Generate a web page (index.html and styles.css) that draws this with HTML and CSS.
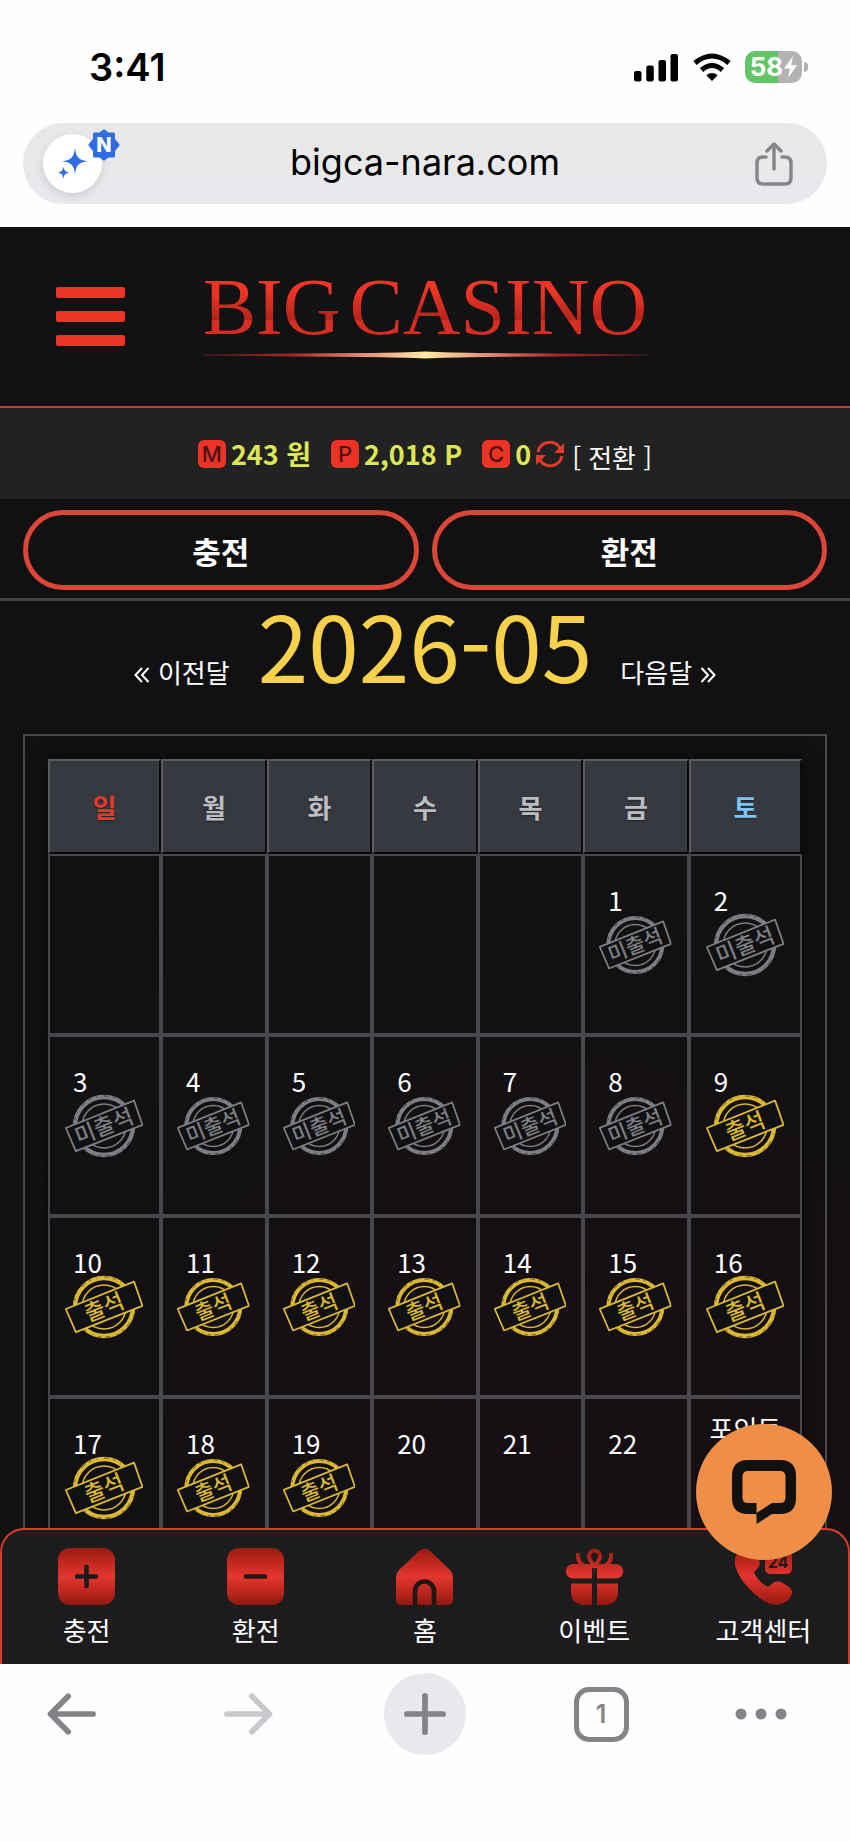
FILE: index.html
```html
<!DOCTYPE html>
<html lang="ko">
<head>
<meta charset="utf-8">
<meta name="viewport" content="width=device-width, initial-scale=1">
<title>BIG CASINO</title>
<link rel="stylesheet" href="styles.css">
</head>
<body>
<svg class="defs" aria-hidden="true">
  <defs>
    <linearGradient id="red" x1="0" y1="0" x2="0" y2="57" gradientUnits="userSpaceOnUse">
      <stop offset="0" stop-color="#9c1a14"/><stop offset=".2" stop-color="#b8251c"/><stop offset=".5" stop-color="#e3362e"/><stop offset=".8" stop-color="#b8251c"/><stop offset="1" stop-color="#8f1812"/>
    </linearGradient>
    <symbol id="ring" viewBox="0 0 78 64">
      <circle cx="39" cy="32" r="29" fill="none" stroke="currentColor" stroke-width="4.4"/>
      <circle cx="39" cy="32" r="30" fill="none" stroke="#111114" stroke-width=".8" stroke-dasharray="3 5 1 7 5 4" opacity=".7"/>
      <circle cx="39" cy="32" r="22" fill="none" stroke="currentColor" stroke-width="1.5"/>
      <path d="M.8 34 69 6.6 77.4 30.8 10.8 57.2Z" fill="#111114" stroke="currentColor" stroke-width="1.8" stroke-linejoin="round"/>
    </symbol>
    <symbol id="absent" viewBox="0 0 78 64">
      <use href="#ring"/>
      <text class="stamp-text" x="39" y="40" text-anchor="middle" transform="rotate(-21.8 39 32)">미출석</text>
    </symbol>
    <symbol id="present" viewBox="0 0 78 64">
      <use href="#ring"/>
      <text class="stamp-text" x="39" y="40" text-anchor="middle" transform="rotate(-21.8 39 32)">출석</text>
    </symbol>
  </defs>
</svg>

<div class="browser-top">
  <div class="status">
    <span class="time">3:41</span>
    <span class="indicators">
      <svg width="46" height="30" viewBox="0 0 46 30"><rect x="1" y="19" width="7.5" height="10.5" rx="2.2"/><rect x="13.3" y="13.5" width="7.5" height="16" rx="2.2"/><rect x="25.5" y="8" width="7.5" height="21.5" rx="2.2"/><rect x="37.5" y="2" width="7.5" height="27.5" rx="2.2"/></svg>
      <svg width="38" height="28" viewBox="0 0 38 28"><path d="M19 28 13.3 22.2Q19 17.6 24.7 22.2Z"/><path d="M8.5 17Q19 8 29.500 17" fill="none" stroke="#000" stroke-width="5"/><path d="M2 10Q19-4 36 10" fill="none" stroke="#000" stroke-width="5"/></svg>
      <span class="battery"><span>58</span><svg width="13" height="22" viewBox="0 0 13 22"><path d="M9 0 0 12.500h6L4 22 13 9H7.200Z" fill="#fff"/></svg></span>
    </span>
  </div>
  <div class="address">
    <button class="assist" aria-label="AI">
      <svg width="32" height="32" viewBox="0 0 32 32"><path d="M18 0c1 9 3.500 12 13 13.300C21.500 14.600 19 17 18 26.500 17 17 14.500 14.600 5 13.300 14.500 12 17 9 18 0ZM6.500 18.500c.6 4 2 5.400 6 6-4 .6-5.400 2-6 6.500-.6-4.500-2-5.900-6-6.500 4-.6 5.400-2 6-6Z" fill="#2f6de0"/></svg>
      <span class="new"><svg width="32" height="32" viewBox="0 0 32 32"><path d="m16 2 4 3h5.500v5.500l4.500 5.500-4.500 5.500V27H20l-4 3-4-3H6.500v-5.500L2 16l4.500-5.500V5H12Z" fill="#2f6de0" stroke="#2f6de0" stroke-width="3" stroke-linejoin="round"/></svg><b>N</b></span>
    </button>
    <span class="url">bigca-nara.com</span>
    <button class="share" aria-label="공유">
      <svg width="38" height="44" viewBox="0 0 38 44" fill="none" stroke="#86868a" stroke-width="3.500" stroke-linecap="round" stroke-linejoin="round"><path d="M11 15H8q-6 0-6 6v15q0 6 6 6h22q6 0 6-6V21q0-6-6-6h-3M19 27V3M12 9l7-7 7 7"/></svg>
    </button>
  </div>
</div>

<div class="site">
  <header class="header">
    <button class="menu" aria-label="메뉴"><i></i><i></i><i></i></button>
    <a class="logo" href="#"><span class="words"><span>BIG</span><span>CASINO</span></span><svg viewBox="0 0 444 12" preserveAspectRatio="none">
      <defs><linearGradient id="beam"><stop offset="0" stop-color="#541a1a"/><stop offset=".2" stop-color="#a82422"/><stop offset=".34" stop-color="#e08070"/><stop offset=".5" stop-color="#ffe9a8"/><stop offset=".66" stop-color="#e08070"/><stop offset=".8" stop-color="#a82422"/><stop offset="1" stop-color="#541a1a"/></linearGradient></defs>
      <path d="M0 5.500 90 4.500 160 4Q200 3.600 222 2.500 244 3.600 284 4L354 4.500 444 5.500V6.500L354 7.500 284 8Q244 8.400 222 9.500 200 8.400 160 8L90 7.500 0 6.500Z" fill="url(#beam)"/></svg></a>
  </header>

  <div class="balance">
    <span class="item"><span class="badge">M</span><b>243 원</b></span>
    <span class="item"><span class="badge">P</span><b>2,018 P</b></span>
    <span class="item"><span class="badge">C</span><b>0</b>
      <button class="swap"><svg width="28" height="28" viewBox="0 0 28 28"><g fill="none" stroke="#e13a2c" stroke-width="3"><path d="M2 12A12 12 0 0 1 24 8M26 16A12 12 0 0 1 4 20"/></g><path d="M28 3v10H18ZM0 25V15h10Z" fill="#e13a2c"/></svg><span>[ 전환 ]</span></button></span>
  </div>

  <div class="actions">
    <button>충전</button>
    <button>환전</button>
  </div>

  <main class="attendance">
    <div class="month">
      <a href="#"><svg width="16" height="16" viewBox="0 0 16 16"><path d="M8 1 1.500 8 8 15M14.500 1 8 8l6.500 7"/></svg>이전달</a>
      <h1>2026-05</h1>
      <a href="#">다음달<svg width="16" height="16" viewBox="0 0 16 16"><path d="m1.500 1 6.500 7-6.500 7M8 1l6.500 7L8 15"/></svg></a>
    </div>
    <div class="frame">
      <table>
        <colgroup><col class="edge"><col><col><col><col><col><col class="edge"></colgroup>
        <thead><tr><th class="sun">일</th><th>월</th><th>화</th><th>수</th><th>목</th><th>금</th><th class="sat">토</th></tr></thead>
        <tbody>
          <tr>
            <td></td><td></td><td></td><td></td><td></td>
            <td>1<svg class="stamp"><use href="#absent"/></svg></td>
            <td>2<svg class="stamp"><use href="#absent"/></svg></td>
          </tr>
          <tr>
            <td>3<svg class="stamp"><use href="#absent"/></svg></td>
            <td>4<svg class="stamp"><use href="#absent"/></svg></td>
            <td>5<svg class="stamp"><use href="#absent"/></svg></td>
            <td>6<svg class="stamp"><use href="#absent"/></svg></td>
            <td>7<svg class="stamp"><use href="#absent"/></svg></td>
            <td>8<svg class="stamp"><use href="#absent"/></svg></td>
            <td>9<svg class="stamp on"><use href="#present"/></svg></td>
          </tr>
          <tr>
            <td>10<svg class="stamp on"><use href="#present"/></svg></td>
            <td>11<svg class="stamp on"><use href="#present"/></svg></td>
            <td>12<svg class="stamp on"><use href="#present"/></svg></td>
            <td>13<svg class="stamp on"><use href="#present"/></svg></td>
            <td>14<svg class="stamp on"><use href="#present"/></svg></td>
            <td>15<svg class="stamp on"><use href="#present"/></svg></td>
            <td>16<svg class="stamp on"><use href="#present"/></svg></td>
          </tr>
          <tr>
            <td>17<svg class="stamp on"><use href="#present"/></svg></td>
            <td>18<svg class="stamp on"><use href="#present"/></svg></td>
            <td>19<svg class="stamp on"><use href="#present"/></svg></td>
            <td>20</td><td>21</td><td>22</td>
            <td class="reward">포인트</td>
          </tr>
        </tbody>
      </table>
    </div>
  </main>

  <nav class="tabs">
    <a href="#"><svg viewBox="0 0 57 57"><rect width="57" height="57" rx="12" fill="url(#red)"/><path d="M28.500 19v19M19 28.500h19" stroke="#1c1c1c" stroke-width="4.600" stroke-linecap="round"/></svg>충전</a>
    <a href="#"><svg viewBox="0 0 57 57"><rect width="57" height="57" rx="12" fill="url(#red)"/><path d="M19 28.500h19" stroke="#2a1513" stroke-width="4.600" stroke-linecap="round"/></svg>환전</a>
    <a href="#"><svg viewBox="0 0 57 57"><path d="M3 22 23 3q5.500-5 11 0L54 22q3 3 3 7v22q0 6-6 6H6q-6 0-6-6V29q0-4 3-7Z" fill="url(#red)"/><path d="M19 57V43a9.500 9.500 0 0 1 19 0v14" fill="none" stroke="#1f1715" stroke-width="4.600"/></svg>홈</a>
    <a href="#"><svg viewBox="0 0 57 57"><path d="M7 16H50a7 7 0 0 1 0 14.500H31V20h-5v10.500H7A7 7 0 0 1 7 16ZM5 35.500h21V57H18Q5 56 5 44ZM31 35.500h21V44q0 12-13 13h-8Z" fill="url(#red)"/><path d="M28.500 18Q23 12 23 8a5.500 5.500 0 0 1 11 0q0 4-5.500 10ZM12 5q-1 9 6 13M45 5q1 9-6 13" fill="none" stroke="url(#red)" stroke-width="4"/></svg>이벤트</a>
    <a href="#"><svg viewBox="0 0 57 57"><path d="M7 3Q15-2 20 5l4 7q2 4-1 8l-4 4q4 10 14 15l5-4q4-3 8-1l8 5q5 3 2 9-4 8-14 9Q28 57 10 36-4 18 1 8 3 4 7 3Z" fill="url(#red)"/><path d="M36 2h15q6 0 6 6v12q0 6-6 6H36q-6 0-6-6V8q0-6 6-6Z" fill="url(#red)"/><text class="hours" x="43" y="20" text-anchor="middle">24</text></svg>고객센터</a>
  </nav>

  <button class="chat" aria-label="채팅 상담">
    <svg width="64" height="64" viewBox="0 0 64 64"><path d="M16 0h32q16 0 16 16v22q0 16-16 16h-8L24.500 64V54H16Q0 54 0 38V16Q0 0 16 0Zm0 11q-5.500 0-5.500 5.500v21q0 5.500 5.500 5.500h8.500v10L40 43h8q5.500 0 5.500-5.500v-21Q53.500 11 48 11Z" fill="#12110f" fill-rule="evenodd"/></svg>
  </button>
</div>

<div class="browser-bottom">
  <button aria-label="뒤로"><svg width="50" height="42" viewBox="0 0 52 44"><path d="M48 22H4M22 3.500 3.500 22 22 40.500" stroke="#828487"/></svg></button>
  <button aria-label="앞으로"><svg width="50" height="42" viewBox="0 0 52 44"><path d="M4 22h44M30 3.500 48.500 22 30 40.500" stroke="#c9c8cc"/></svg></button>
  <button class="add" aria-label="새 탭"><svg width="42" height="42" viewBox="0 0 44 44"><path d="M22 3v38M3 22h38" stroke="#828487"/></svg></button>
  <button aria-label="탭 1개"><span class="count">1</span></button>
  <button aria-label="더보기"><svg width="52" height="12" viewBox="0 0 52 12"><g fill="#828487"><circle cx="6" cy="6" r="5.500"/><circle cx="26" cy="6" r="5.500"/><circle cx="46" cy="6" r="5.500"/></g></svg></button>
</div>
</body>
</html>
```

FILE: styles.css
```css
* {
  box-sizing: border-box;
}

body {
  margin: 0;
  height: 100vh;
  display: flex;
  flex-direction: column;
  background: #fefefe;
  color: #fff;
  font-family: "Noto Sans CJK KR", sans-serif;
  font-size: 26px;
}

button {
  padding: 0;
  border: 0;
  background: none;
  color: inherit;
  font: inherit;
}

a {
  color: inherit;
  text-decoration: none;
}

svg {
  display: block;
}

.defs {
  position: absolute;
  width: 0;
  height: 0;
}

/* Browser chrome, top */
.browser-top {
  padding: 0 23px 23px;
  color: #000;
  font-family: Inter, sans-serif;
}

.status {
  height: 123px;
  padding: 10px 18px 0 66px;
  display: flex;
  align-items: center;
  justify-content: space-between;
}

.time {
  font-size: 38px;
  font-weight: 600;
}

.indicators {
  display: flex;
  align-items: center;
  gap: 14px;
}

.battery {
  position: relative;
  width: 57px;
  height: 32px;
  margin-right: 7px;
  display: flex;
  align-items: center;
  justify-content: center;
  gap: 1px;
  border-radius: 10px;
  background: linear-gradient(90deg, #65c466 58%, #b3b3b5 58%);
  color: #fff;
  font-size: 26px;
  font-weight: 700;
}

.battery::after {
  content: "";
  position: absolute;
  right: -6px;
  width: 4px;
  height: 10px;
  border-radius: 0 5px 5px 0;
  background: #b3b3b5;
}

.address {
  height: 81px;
  padding: 0 20px;
  display: grid;
  grid-template-columns: 1fr auto 1fr;
  align-items: center;
  border-radius: 41px;
  background: linear-gradient(#e8e8e8, #e9e8ed);
}

.assist {
  position: relative;
  width: 59px;
  height: 59px;
  display: grid;
  place-items: center;
  border-radius: 50%;
  background: #fff;
  box-shadow: 0 3px 8px #0002;
}

.new {
  position: absolute;
  top: -5px;
  right: -18px;
  display: grid;
  place-items: center;
}

.new > * {
  grid-area: 1 / 1;
}

.new b {
  color: #fff;
  font-size: 20px;
  font-weight: 800;
}

.url {
  padding-bottom: 3px;
  font-size: 36px;
}

.share {
  justify-self: end;
  margin-right: 14px;
}

/* Site */
.site {
  position: relative;
  flex: 1;
  min-height: 0;
  overflow: hidden;
  background: radial-gradient(circle at 65% 85%, #170f13, #111113 50%);
}

.header {
  height: 181px;
  padding: 0 56px;
  display: grid;
  grid-template-columns: 1fr auto 1fr;
  align-items: center;
  border-bottom: 2px solid #c93c32;
  background: #121114;
}

.menu {
  width: 69px;
  display: grid;
  gap: 13px;
}

.menu i {
  height: 11px;
  border-radius: 2px;
  background: #ec3424;
}

.logo {
  padding-bottom: 5px;
  display: grid;
  gap: 3px;
  font: 80px/78px "Liberation Serif", serif;
}

.words {
  display: flex;
  gap: 9px;
}

.words span {
  background: linear-gradient(#ee3526 30%, #b5241a 66%, #d93025 68%, #d02c20 90%);
  background-clip: text;
  color: transparent;
}

.logo svg {
  width: 100%;
  height: 12px;
}

.balance {
  height: 91px;
  display: flex;
  align-items: center;
  justify-content: center;
  gap: 20px;
  background: #222;
}

.item {
  display: flex;
  align-items: center;
  gap: 5px;
  color: #dfe655;
}

.item b {
  font-size: 27px;
}

.badge {
  width: 28px;
  height: 28px;
  display: grid;
  place-items: center;
  border-radius: 6px;
  background: #ec3325;
  color: #4a1512;
  font: 500 22px/28px Inter, sans-serif;
}

.swap {
  display: flex;
  align-items: center;
  gap: 8px;
  color: #fff;
}

.swap span {
  padding-top: 6px;
}

.actions {
  height: 102px;
  padding: 11px 23px 8px;
  display: grid;
  grid-template-columns: 1fr 1fr;
  gap: 13px;
  border-bottom: 3px solid #454547;
  background: #111113;
}

.actions button {
  height: 80px;
  border: 5px solid #db4639;
  border-radius: 40px;
  background: #121112;
  font-size: 31px;
  font-weight: 700;
}

.attendance {
  padding: 2px 23px 0;
}

.month {
  height: 131px;
  display: flex;
  align-items: baseline;
  justify-content: center;
  gap: 28px;
}

.month h1 {
  margin: 0;
  color: #f7d14b;
  font-family: "Noto Sans CJK JP", sans-serif;
  font-size: 91px;
  font-weight: 400;
  line-height: 80px;
}

.month a {
  display: flex;
  align-items: baseline;
  gap: 8px;
  line-height: 40px;
}

.month svg {
  fill: none;
  stroke: #fff;
  stroke-width: 2;
}

.frame {
  padding: 23px;
  border: 2px solid #48474a;
}

table {
  width: 100%;
  table-layout: fixed;
  border-spacing: 0;
  box-shadow: 0 0 14px #0008;
}

col {
  width: 14%;
}

.edge {
  width: 15%;
}

th {
  height: 95px;
  padding: 0;
  border: 2px solid;
  border-color: #5c5c60 #0c0c10 #08080a #5c5c60;
  background: #373941;
  color: #bbbdc0;
  text-shadow: 0 1px 2px #0006;
}

.sun {
  color: #e8382d;
}

.sat {
  color: #7cc4f2;
}

td {
  height: 181px;
  padding: 31px 0 0 23px;
  border: 2px solid #48474b;
  line-height: 26px;
  vertical-align: top;
}

.stamp {
  width: calc(100% - 6px);
  height: 64px;
  margin-left: -9px;
  color: #7f7f83;
}

.on {
  color: #dcb935;
}

.stamp-text {
  fill: currentColor;
  font-size: 22px;
  font-weight: 500;
}

.reward {
  padding: 16px 0 0;
  text-align: center;
}

/* Site tab bar, floats over the calendar */
.tabs {
  position: absolute;
  inset: auto 0 0;
  height: 136px;
  padding-top: 18px;
  display: grid;
  grid-template-columns: repeat(5, 1fr);
  border: 2px solid #d83a2c;
  border-bottom: 0;
  border-radius: 24px 24px 0 0;
  background: linear-gradient(#1b1d1c, #1e1b1f);
}

.tabs a {
  display: flex;
  flex-direction: column;
  align-items: center;
  gap: 6px;
  line-height: 38px;
}

.tabs svg {
  width: 57px;
  height: 57px;
  overflow: visible;
}

.hours {
  fill: #1c1c1c;
  font: 700 16px Inter, sans-serif;
}

.chat {
  position: absolute;
  right: 18px;
  bottom: 104px;
  width: 136px;
  height: 136px;
  display: grid;
  place-items: center;
  border-radius: 50%;
  background: #ef8e46;
}

/* Browser chrome, bottom */
.browser-bottom {
  height: 177px;
  padding: 9px 32px 0 0;
  display: grid;
  grid-template-columns: 144fr 208fr 146fr 206fr 114fr;
  align-items: start;
}

.browser-bottom button {
  height: 82px;
  display: grid;
  place-items: center;
}

.browser-bottom path {
  fill: none;
  stroke-width: 6;
  stroke-linecap: round;
  stroke-linejoin: round;
}

.browser-bottom .add {
  width: 82px;
  justify-self: center;
  border-radius: 50%;
  background: #e9e8ed;
}

.count {
  width: 55px;
  height: 55px;
  border: 5px solid #828487;
  border-radius: 15px;
  color: #828487;
  font: 600 25px/45px Inter, sans-serif;
}
```
